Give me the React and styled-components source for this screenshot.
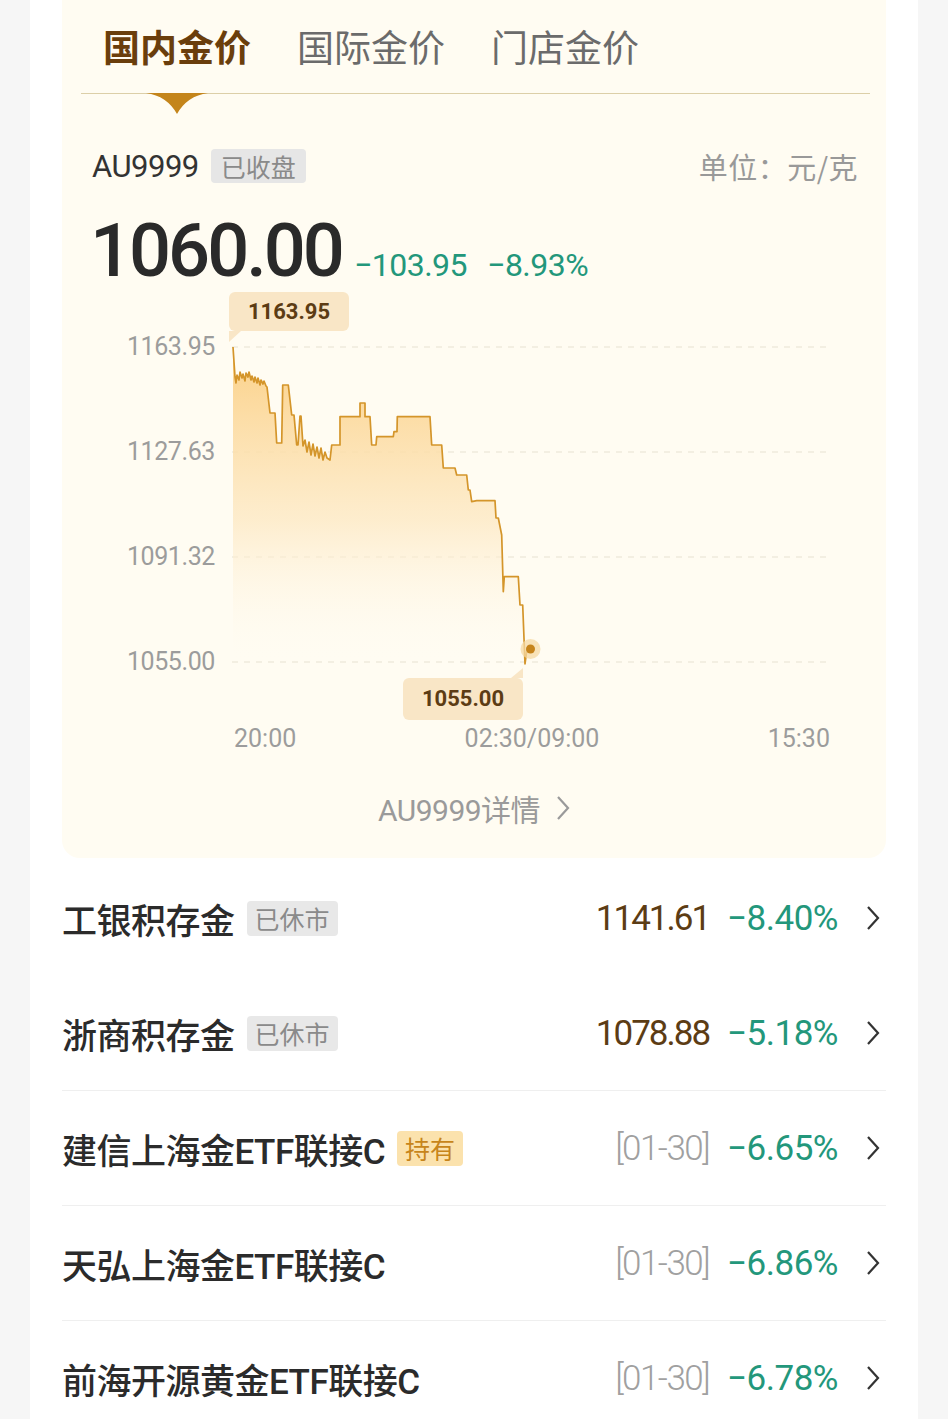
import React from "react";
import styled, { createGlobalStyle } from "styled-components";

const GlobalStyle = createGlobalStyle`
  body {
    margin: 0;
    background: #f6f6f6;
    font-family: Roboto, "Noto Sans CJK SC", sans-serif;
  }
`;

const GREEN = "#23977b";
const BROWN = "#5c3c14";

// chart trace in page pixels, shifted into the plot box at render
const trace = [
  [233, 347], [235, 377], [236, 383], [237, 375], [239, 380], [240, 372], [242, 378],
  [243, 374], [245, 381], [246, 373], [248, 377], [249, 372], [251, 380], [252, 376],
  [254, 382], [255, 377], [257, 383], [258, 378], [260, 385], [261, 380], [263, 384],
  [264, 381], [266, 386], [267, 387], [270, 413], [275, 413], [276.7, 443], [281.7, 443],
  [282.7, 385], [288.3, 385], [291.7, 415], [294, 415], [296.7, 445], [298, 445],
  [300, 416], [301, 416], [303, 446], [305, 440], [307, 452], [309, 442], [311, 455],
  [313, 444], [315, 456], [317, 447], [319, 458], [321, 448], [323, 460], [325, 452],
  [327, 458], [330, 460], [331.7, 445], [340, 445], [340, 416.7], [360, 416.7],
  [360, 403], [365, 403], [365, 416.7], [370, 416.7], [371.7, 445], [376, 445],
  [376.7, 436.7], [393.3, 436.7], [394, 431.7], [397, 431.7], [397.3, 416.7],
  [430, 416.7], [431.7, 445], [441.7, 445], [443.3, 468], [455, 468], [456.7, 475],
  [466.7, 475], [468.3, 490], [470, 490], [471.7, 501.7], [476.7, 500.7], [495, 500.7],
  [496, 518], [498.3, 518], [501.7, 535], [503.3, 591.7], [504.3, 576.7], [518.3, 576.7],
  [520, 605], [522.7, 605], [525, 664], [527, 649],
];
const OX = 232;
const OY = 292;
const pts = trace.map(([x, y]) => [x - OX, y - OY]);
const linePath = "M" + pts.map(([x, y]) => `${x},${y}`).join(" L");
const areaPath = `${linePath} L${pts[pts.length - 1][0]},372 L${pts[0][0]},372 Z`;

const yLabels = ["1163.95", "1127.63", "1091.32", "1055.00"];
const gridY = [55, 160, 265, 370];

const rows = [
  { name: "工银积存金", badge: "已休市", price: "1141.61", change: "−8.40%" },
  { name: "浙商积存金", badge: "已休市", price: "1078.88", change: "−5.18%" },
  { name: "建信上海金ETF联接C", badge: "持有", hold: true, date: "[01-30]", change: "−6.65%", line: true },
  { name: "天弘上海金ETF联接C", date: "[01-30]", change: "−6.86%", line: true },
  { name: "前海开源黄金ETF联接C", date: "[01-30]", change: "−6.78%", line: true },
];

const Chevron = ({ color = "#333", w = 2.2 }) => (
  <svg width="14" height="26" viewBox="0 0 14 26">
    <polyline points="2,2 12,13 2,24" fill="none" stroke={color} strokeWidth={w} strokeLinejoin="miter" />
  </svg>
);

const TabPointer = () => (
  <svg width="62" height="21" viewBox="0 0 62 21">
    <path d="M0 0 H62 Q41 3 31 21 Q21 3 0 0 Z" fill="#c4851b" />
  </svg>
);

export default function App() {
  return (
    <>
      <GlobalStyle />
      <Card>
        <Panel>
          <TabBar>
            <Tab active>
              国内金价
              <Pointer>
                <TabPointer />
              </Pointer>
            </Tab>
            <Tab>国际金价</Tab>
            <Tab>门店金价</Tab>
          </TabBar>

          <InfoRow>
            <Code>AU9999</Code>
            <StatusBadge>已收盘</StatusBadge>
            <Unit>单位：元/克</Unit>
          </InfoRow>

          <PriceRow>
            <BigPrice>1060.00</BigPrice>
            <Delta>−103.95</Delta>
            <Delta>−8.93%</Delta>
          </PriceRow>

          <Chart>
            <YAxis>
              {yLabels.map((l) => (
                <YLabel key={l}>{l}</YLabel>
              ))}
            </YAxis>
            <Plot>
              <svg width="598" height="430" viewBox="0 0 598 430">
                <defs>
                  <linearGradient id="goldFill" x1="0" y1="0" x2="0" y2="1">
                    <stop offset="0%" stopColor="#fbd086" stopOpacity="1" />
                    <stop offset="55%" stopColor="#fde8c2" stopOpacity="0.75" />
                    <stop offset="100%" stopColor="#fffcf2" stopOpacity="0" />
                  </linearGradient>
                </defs>
                {gridY.map((y) => (
                  <line key={y} x1="0" x2="598" y1={y} y2={y} stroke="#e7e1d2" strokeWidth="1.2" strokeDasharray="6 6" />
                ))}
                <path d={areaPath} fill="url(#goldFill)" />
                <path d={linePath} fill="none" stroke="#d4952a" strokeWidth="1.7" strokeLinejoin="round" />
                <circle cx="298.5" cy="357" r="10" fill="#f5d9a3" opacity="0.75" />
                <circle cx="298.5" cy="357" r="4.5" fill="#c6841b" />
              </svg>
              <Tip top>1163.95</Tip>
              <Tip>1055.00</Tip>
            </Plot>
            <span />
            <XAxis>
              <span>20:00</span>
              <span>02:30/09:00</span>
              <span>15:30</span>
            </XAxis>
          </Chart>

          <Details>
            AU9999详情
            <Chevron color="#9a9a9a" w={2.2} />
          </Details>
        </Panel>

        <List>
          {rows.map((r) => (
            <Row key={r.name} line={r.line}>
              <Name>{r.name}</Name>
              {r.badge && <RowBadge hold={r.hold}>{r.badge}</RowBadge>}
              <Right>
                {r.price && <Price>{r.price}</Price>}
                {r.date && <DateTag>{r.date}</DateTag>}
                <Change>{r.change}</Change>
                <Chevron />
              </Right>
            </Row>
          ))}
        </List>
      </Card>
    </>
  );
}

const Card = styled.div`
  margin: 0 30px;
  min-height: 100vh;
  background: #fff;
  padding: 0 32px;
  overflow: hidden;
`;

const Panel = styled.div`
  background: #fffcf2;
  border-radius: 0 0 18px 18px;
  height: 858px;
  box-sizing: border-box;
`;

const TabBar = styled.div`
  display: flex;
  align-items: center;
  gap: 46px;
  height: 93px;
  margin: 0 16px 0 19px;
  padding-left: 22px;
  border-bottom: 1px solid #dccfa8;
`;

const Tab = styled.div`
  position: relative;
  font-family: "Noto Sans CJK SC", sans-serif;
  font-size: 37px;
  line-height: 1;
  font-weight: ${(p) => (p.active ? 700 : 400)};
  color: ${(p) => (p.active ? "#6a3e0c" : "#6b6b6b")};
`;

const Pointer = styled.div`
  position: absolute;
  left: 50%;
  top: 65px;
  transform: translateX(-50%);
  line-height: 0;
`;

const InfoRow = styled.div`
  display: flex;
  align-items: center;
  height: 36px;
  margin-top: 54px;
  padding: 0 28px 0 30px;
`;

const Code = styled.span`
  font-size: 31px;
  color: #333;
  letter-spacing: -0.5px;
`;

const StatusBadge = styled.span`
  margin-left: 12px;
  height: 34px;
  line-height: 34px;
  padding: 0 10px;
  border-radius: 4px;
  background: #e6e6e6;
  color: #8a8a8a;
  font-family: "Noto Sans CJK SC", sans-serif;
  font-size: 25px;
`;

const Unit = styled.span`
  margin-left: auto;
  font-family: "Noto Sans CJK SC", sans-serif;
  font-size: 29px;
  color: #999;
  letter-spacing: 0.5px;
`;

const PriceRow = styled.div`
  display: flex;
  align-items: baseline;
  gap: 20px;
  line-height: 80px;
  height: 80px;
  margin-top: 27px;
  padding-left: 28px;
`;

const BigPrice = styled.span`
  font-size: 74px;
  font-weight: 500;
  color: #2a2a2a;
  letter-spacing: -3px;
  margin-right: -8px;
`;

const Delta = styled.span`
  font-size: 32px;
  color: ${GREEN};
  letter-spacing: -0.5px;
`;

const Chart = styled.div`
  display: grid;
  grid-template-columns: 153px 598px;
  column-gap: 17px;
  margin-top: 1px;
`;

const YAxis = styled.div`
  display: flex;
  flex-direction: column;
  align-items: flex-end;
  gap: 75px;
  padding-top: 40px;
`;

const YLabel = styled.span`
  font-size: 25px;
  line-height: 30px;
  color: #9c9c9c;
  letter-spacing: -0.4px;
`;

const Plot = styled.div`
  position: relative;
  height: 430px;
  svg {
    display: block;
  }
`;

const Tip = styled.div`
  position: absolute;
  left: ${(p) => (p.top ? "-3px" : "171px")};
  top: ${(p) => (p.top ? "0" : "386px")};
  width: 120px;
  height: ${(p) => (p.top ? "39px" : "42px")};
  line-height: ${(p) => (p.top ? "39px" : "42px")};
  text-align: center;
  background: #f9e6c6;
  border-radius: 6px;
  font-size: 22px;
  font-weight: 700;
  color: ${BROWN};
  &::after {
    content: "";
    position: absolute;
    ${(p) =>
      p.top
        ? `left: 0; bottom: -11px; border-top: 11px solid #f9e6c6; border-right: 12px solid transparent;`
        : `right: 0; top: -10px; border-bottom: 10px solid #f9e6c6; border-left: 12px solid transparent;`}
  }
`;

const XAxis = styled.div`
  display: flex;
  justify-content: space-between;
  padding-left: 2px;
  margin-top: 2px;
  font-size: 25px;
  line-height: 30px;
  color: #9c9c9c;
`;

const Details = styled.div`
  display: flex;
  justify-content: center;
  align-items: center;
  gap: 16px;
  margin-top: 34px;
  height: 40px;
  font-family: Roboto, "Noto Sans CJK SC", sans-serif;
  font-size: 30px;
  color: #9a9a9a;
  letter-spacing: -0.5px;
`;

const List = styled.div`
  margin-top: 2px;
`;

const Row = styled.div`
  display: flex;
  align-items: center;
  height: 114px;
  border-top: 1px solid ${(p) => (p.line ? "#efefef" : "transparent")};
  padding-right: 6px;
`;

const Name = styled.span`
  font-family: Roboto, "Noto Sans CJK SC", sans-serif;
  font-size: 35px;
  font-weight: 500;
  color: #2b2b2b;
  letter-spacing: -0.5px;
`;

const RowBadge = styled.span`
  margin-left: 12px;
  height: 35px;
  line-height: 35px;
  padding: 0 8px;
  border-radius: 4px;
  background: ${(p) => (p.hold ? "#fbe2ad" : "#e8e8e8")};
  color: ${(p) => (p.hold ? "#c7851b" : "#8a8a8a")};
  font-family: "Noto Sans CJK SC", sans-serif;
  font-size: 25px;
`;

const Right = styled.div`
  margin-left: auto;
  display: flex;
  align-items: center;
  gap: 18px;
  font-size: 35px;
  svg {
    margin-left: 10px;
  }
`;

const Price = styled.span`
  color: ${BROWN};
  letter-spacing: -2px;
`;

const DateTag = styled.span`
  color: #a0a0a0;
  letter-spacing: -1.5px;
  font-weight: 300;
`;

const Change = styled.span`
  color: ${GREEN};
  letter-spacing: -0.5px;
`;
